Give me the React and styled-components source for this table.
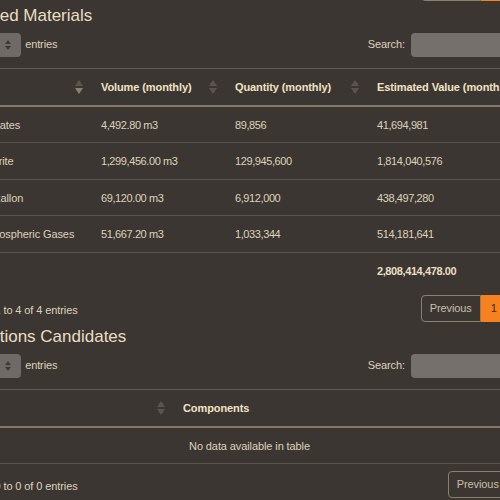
import React from "react";
import styled, { createGlobalStyle } from "styled-components";

const Global = createGlobalStyle`
  html, body { margin: 0; padding: 0; overflow: hidden; background: #3c3632; }
  body { font-family: "Liberation Sans", Arial, sans-serif; font-size: 11px; letter-spacing: -0.1px; color: #dcd2bc; }
`;

const Wrapper = styled.div`
  width: 611px;
  margin-left: -56px;
  display: flex;
  flex-direction: column;
`;

const Title = styled.h3`
  margin: 1.5px 0 4px;
  padding-left: 16px;
  font-size: 17px;
  line-height: 26px;
  font-weight: normal;
  letter-spacing: 0;
  color: #e9dec3;
`;

const Controls = styled.div`
  display: flex;
  justify-content: space-between;
  align-items: center;
  height: 24px;
`;

const Label = styled.label`
  display: flex;
  align-items: center;
  gap: 4px;
  line-height: 17px;
`;

const Select = styled.span`
  width: 46px;
  height: 24px;
  border-radius: 4px;
  background: #6f6a66;
  display: flex;
  align-items: center;
  justify-content: flex-end;
  padding-right: 10px;
  box-sizing: border-box;
`;

const SearchInput = styled.span`
  width: 144px;
  height: 24px;
  border-radius: 4px;
  background: #75706c;
  margin-left: 2px;
`;

const Table = styled.table`
  width: 100%;
  margin-top: 11px;
  border-collapse: collapse;
  table-layout: fixed;
  border-top: 1px solid #625950;
`;

const Th = styled.th`
  padding: 10px 8px 9px 10px;
  line-height: 17px;
  text-align: left;
  font-weight: bold;
  color: #f0e3c3;
  border-bottom: 2px solid #85786b;
  white-space: nowrap;
  overflow: hidden;
`;

const ThInner = styled.div`
  display: flex;
  justify-content: space-between;
  align-items: center;
`;

const Td = styled.td`
  padding: 10px 10px 9px ${(p) => (p.$name ? "36px" : "10px")};
  line-height: 16.5px;
  text-align: ${(p) => (p.$center ? "center" : "left")};
  font-weight: ${(p) => (p.$bold ? "bold" : "normal")};
  letter-spacing: ${(p) => (p.$num ? "-0.4px" : "-0.1px")};
  color: ${(p) => (p.$bold ? "#eadfc2" : "#dcd2bc")};
  border-bottom: ${(p) => (p.$foot ? "none" : "1px solid #5c534c")};
  white-space: nowrap;
`;

const Bottom = styled.div`
  display: flex;
  justify-content: space-between;
  align-items: center;
  margin-top: 7px;
`;

const Info = styled.div`
  padding: 3px 0 0 6px;
  line-height: 17px;
`;

const Pager = styled.div`
  display: flex;
  height: 27px;
`;

const PageBtn = styled.span`
  display: flex;
  align-items: center;
  padding: 0 ${(p) => (p.$active ? "10px" : p.$last ? "12px" : "8px")};
  border: 1px solid ${(p) => (p.$active ? "#f5821f" : "#8b7f73")};
  border-left-width: ${(p) => (p.$first ? "1px" : "0")};
  background: ${(p) => (p.$active ? "#f5821f" : "transparent")};
  color: ${(p) => (p.$active ? "#3a2a1e" : "#c9bea9")};
  border-radius: ${(p) => (p.$first ? "4px 0 0 4px" : p.$last ? "0 4px 4px 0" : "0")};
  line-height: 17px;
`;

const TopPager = styled.div`
  display: flex;
  justify-content: flex-end;
  margin-top: -26px;
`;

const SortIcon = ({ active }) => (
  <svg width="8" height="14" viewBox="0 0 8 14">
    <polygon points="4,0 8,6 0,6" fill="#5d554d" />
    <polygon points="0,8 8,8 4,14" fill={active ? "#8c8272" : "#5d554d"} />
  </svg>
);

const Caret = () => (
  <svg width="6" height="10" viewBox="0 0 6 10">
    <polygon points="3,0 6,4 0,4" fill="#3f3a36" />
    <polygon points="0,6 6,6 3,10" fill="#3f3a36" />
  </svg>
);

const Pagination = ({ pages }) => (
  <Pager>
    <PageBtn $first>Previous</PageBtn>
    {pages && <PageBtn $active>1</PageBtn>}
    <PageBtn $last>Next</PageBtn>
  </Pager>
);

const Header = ({ children, sort, active }) => (
  <Th>
    <ThInner>
      <span>{children}</span>
      {sort && <SortIcon active={active} />}
    </ThInner>
  </Th>
);

const LengthCtl = () => (
  <Label>
    Show
    <Select>
      <Caret />
    </Select>
    entries
  </Label>
);

const SearchCtl = () => (
  <Label>
    Search:
    <SearchInput />
  </Label>
);

const rows = [
  ["Silicates", "4,492.80 m3", "89,856", "41,694,981"],
  ["Pyerite", "1,299,456.00 m3", "129,945,600", "1,814,040,576"],
  ["Mexallon", "69,120.00 m3", "6,912,000", "438,497,280"],
  ["Atmospheric Gases", "51,667.20 m3", "1,033,344", "514,181,641"],
];

export default function App() {
  return (
    <>
      <Global />
      <Wrapper>
        <TopPager>
          <Pagination pages />
        </TopPager>

        <Title>Refined Materials</Title>
        <Controls>
          <LengthCtl />
          <SearchCtl />
        </Controls>
        <Table>
          <colgroup>
            <col style={{ width: 147 }} />
            <col style={{ width: 134 }} />
            <col style={{ width: 142 }} />
            <col />
          </colgroup>
          <thead>
            <tr>
              <Header sort active>Material</Header>
              <Header sort>Volume (monthly)</Header>
              <Header sort>Quantity (monthly)</Header>
              <Header sort>Estimated Value (monthly)</Header>
            </tr>
          </thead>
          <tbody>
            {rows.map((r) => (
              <tr key={r[0]}>
                <Td $name>{r[0]}</Td>
                <Td $num>{r[1]}</Td>
                <Td $num>{r[2]}</Td>
                <Td $num>{r[3]}</Td>
              </tr>
            ))}
          </tbody>
          <tfoot>
            <tr>
              <Td $foot />
              <Td $foot />
              <Td $foot />
              <Td $foot $num $bold>2,808,414,478.00</Td>
            </tr>
          </tfoot>
        </Table>
        <Bottom>
          <Info>Showing 1 to 4 of 4 entries</Info>
          <Pagination pages />
        </Bottom>

        <Title>Reactions Candidates</Title>
        <Controls>
          <LengthCtl />
          <SearchCtl />
        </Controls>
        <Table>
          <colgroup>
            <col style={{ width: 229 }} />
            <col />
          </colgroup>
          <thead>
            <tr>
              <Header sort>Reaction</Header>
              <Header>Components</Header>
            </tr>
          </thead>
          <tbody>
            <tr>
              <Td colSpan={2} $center>No data available in table</Td>
            </tr>
          </tbody>
        </Table>
        <Bottom>
          <Info>Showing 0 to 0 of 0 entries</Info>
          <Pagination />
        </Bottom>
      </Wrapper>
    </>
  );
}
